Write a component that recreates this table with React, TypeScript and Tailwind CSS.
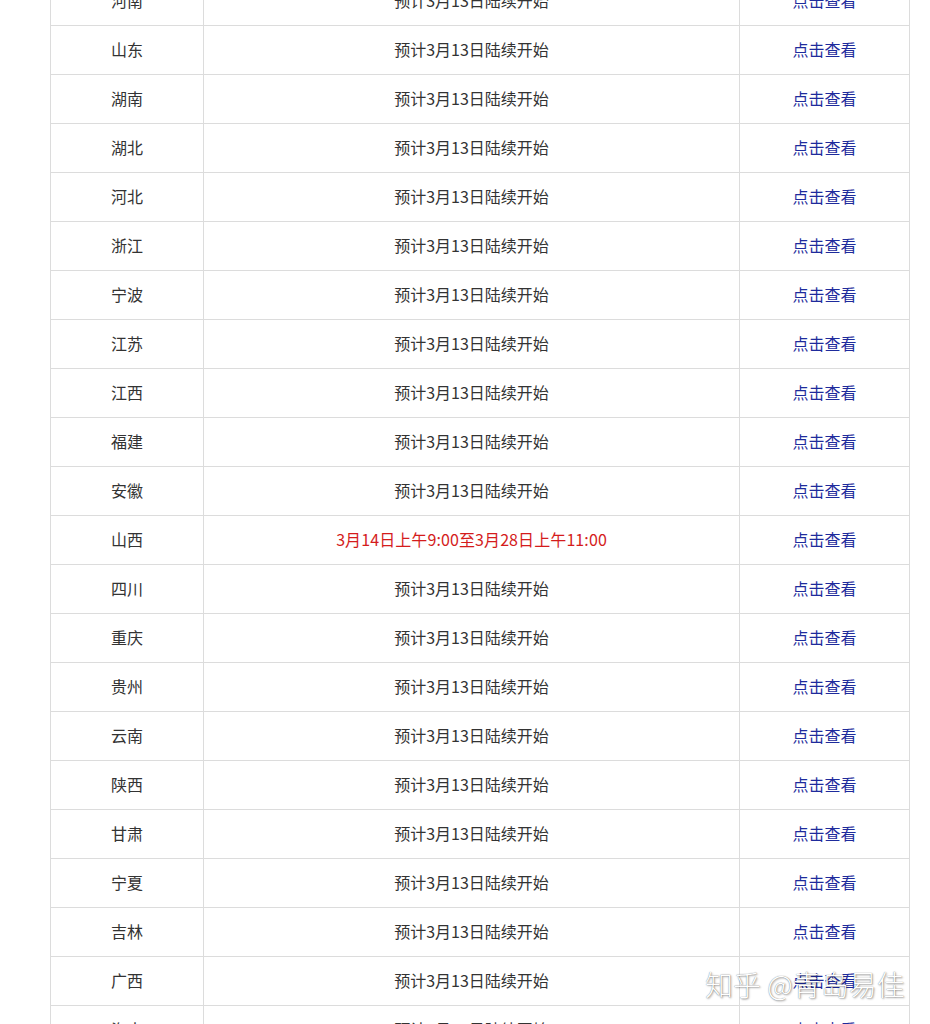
import React from "react";

const rows: { name: string; time: string; hot?: boolean }[] = [
  { name: "河南", time: "预计3月13日陆续开始" },
  { name: "山东", time: "预计3月13日陆续开始" },
  { name: "湖南", time: "预计3月13日陆续开始" },
  { name: "湖北", time: "预计3月13日陆续开始" },
  { name: "河北", time: "预计3月13日陆续开始" },
  { name: "浙江", time: "预计3月13日陆续开始" },
  { name: "宁波", time: "预计3月13日陆续开始" },
  { name: "江苏", time: "预计3月13日陆续开始" },
  { name: "江西", time: "预计3月13日陆续开始" },
  { name: "福建", time: "预计3月13日陆续开始" },
  { name: "安徽", time: "预计3月13日陆续开始" },
  { name: "山西", time: "3月14日上午9:00至3月28日上午11:00", hot: true },
  { name: "四川", time: "预计3月13日陆续开始" },
  { name: "重庆", time: "预计3月13日陆续开始" },
  { name: "贵州", time: "预计3月13日陆续开始" },
  { name: "云南", time: "预计3月13日陆续开始" },
  { name: "陕西", time: "预计3月13日陆续开始" },
  { name: "甘肃", time: "预计3月13日陆续开始" },
  { name: "宁夏", time: "预计3月13日陆续开始" },
  { name: "吉林", time: "预计3月13日陆续开始" },
  { name: "广西", time: "预计3月13日陆续开始" },
  { name: "海南", time: "预计3月13日陆续开始" },
];

export default function App() {
  return (
    <div className="relative w-[930px] h-[1024px] overflow-hidden bg-white font-['Noto_Sans_CJK_SC','Microsoft_YaHei',sans-serif] text-[16px]">
      <div className="ml-[50px] -mt-[23px] w-[860px] border-x border-[#dcdcdc]">
        {rows.map((r) => (
          <div key={r.name} className="grid grid-cols-[153px_536px_169px] h-[49px] border-b border-[#dcdcdc]">
            <div className="flex items-center justify-center pb-[2px] border-r border-[#dcdcdc] text-[#333]">
              {r.name}
            </div>
            <div
              className={
                r.hot
                  ? "flex items-center justify-center pb-[2px] border-r border-[#dcdcdc] text-[#d41c1c] tracking-[0.1px]"
                  : "flex items-center justify-center pb-[2px] border-r border-[#dcdcdc] text-[#333]"
              }
            >
              {r.time}
            </div>
            <div className="flex items-center justify-center pb-[2px] text-[#1e2b9c]">
              <span className="cursor-pointer">点击查看</span>
            </div>
          </div>
        ))}
      </div>

      {/* watermark */}
      <div className="absolute left-[705px] top-[964px] text-[28px] leading-[40px] font-light text-white [text-shadow:0_0_1px_rgba(0,0,0,0.55),1px_1px_2px_rgba(0,0,0,0.35)]">
        知乎 @青岛易佳
      </div>
    </div>
  );
}
